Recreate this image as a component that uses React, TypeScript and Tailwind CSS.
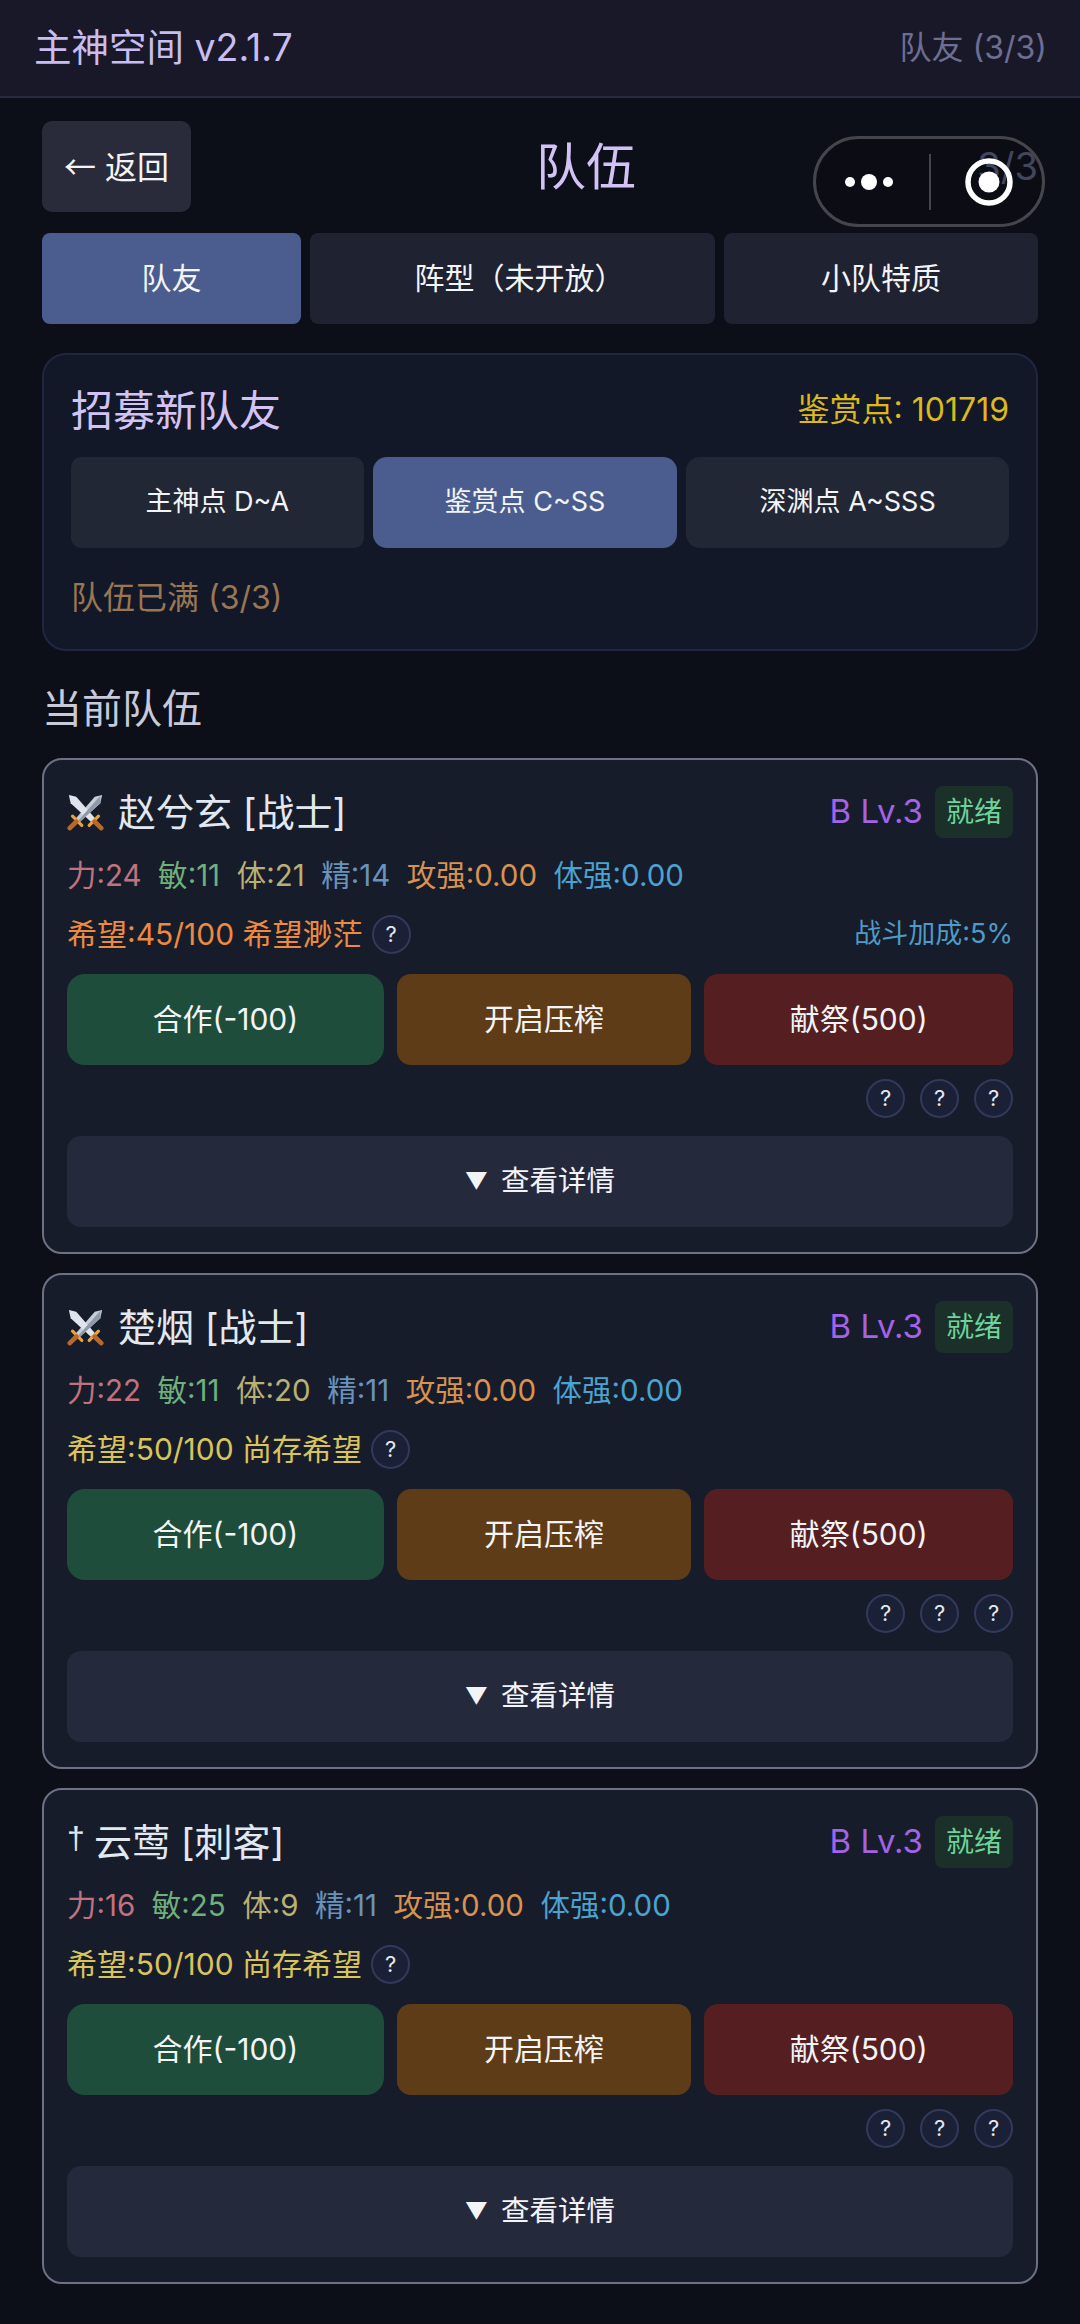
const fontStack = "font-['Inter','Noto_Sans_CJK_SC',sans-serif]";

function Swords() {
  return (
    <svg viewBox="0 0 40 40" className="w-[37px] h-[37px] shrink-0">
      <path d="M38 1 L36 10 L13 31 L9 27 L30 3 Z" fill="#c6ced8" />
      <path d="M2 1 L10 3 L31 27 L27 31 L4 10 Z" fill="#dfe5ec" />
      <path d="M36 2 L12 29 L13 31 L36 10 Z" fill="#8f9aa8" />
      <path d="M6 24 L16 34 M34 24 L24 34" stroke="#e8a33d" strokeWidth="3.5" strokeLinecap="round" />
      <path d="M10 30 L3 37 M30 30 L37 37" stroke="#b9682c" strokeWidth="5" strokeLinecap="round" />
    </svg>
  );
}

function Help() {
  return (
    <div className="w-[39px] h-[39px] rounded-full border-2 border-[#32395a] bg-[#1a2035] flex items-center justify-center text-[22px] text-[#e5e7eb]">
      ?
    </div>
  );
}

type Member = {
  icon: "swords" | "dagger";
  name: string;
  stats: [string, string][];
  hope: string;
  hopeColor: string;
  bonus?: string;
};

const C = ["text-[#c0737f]", "text-[#6fb07c]", "text-[#b9b074]", "text-[#6a93bb]", "text-[#d9924f]", "text-[#4aa3d0]"];

const members: Member[] = [
  {
    icon: "swords",
    name: "赵兮玄 [战士]",
    stats: [["力", "24"], ["敏", "11"], ["体", "21"], ["精", "14"], ["攻强", "0.00"], ["体强", "0.00"]],
    hope: "希望:45/100 希望渺茫",
    hopeColor: "text-[#ed8a3f]",
    bonus: "战斗加成:5%",
  },
  {
    icon: "swords",
    name: "楚烟 [战士]",
    stats: [["力", "22"], ["敏", "11"], ["体", "20"], ["精", "11"], ["攻强", "0.00"], ["体强", "0.00"]],
    hope: "希望:50/100 尚存希望",
    hopeColor: "text-[#d9c45c]",
  },
  {
    icon: "dagger",
    name: "云莺 [刺客]",
    stats: [["力", "16"], ["敏", "25"], ["体", "9"], ["精", "11"], ["攻强", "0.00"], ["体强", "0.00"]],
    hope: "希望:50/100 尚存希望",
    hopeColor: "text-[#d9c45c]",
  },
];

function Card({ m }: { m: Member }) {
  return (
    <div className="h-[496px] rounded-[20px] border-[2.5px] border-[#6c7184] bg-[#171c2b] px-[23px] pt-[25px]">
      <div className="flex items-center justify-between h-[54px]">
        <div className="flex items-center gap-[14px] text-[38px] leading-none text-[#e2e8f0]">
          {m.icon === "swords" ? <Swords /> : <span className="text-[32px] -mt-[8px] text-[#e2e8f0] font-['Liberation_Sans',sans-serif] w-[13px]">†</span>}
          <span>{m.name}</span>
        </div>
        <div className="flex items-center gap-[12px]">
          <span className="text-[33px] text-[#a463e6]">B Lv.3</span>
          <span className="w-[78px] h-[52px] rounded-[8px] bg-[#1a3029] flex items-center justify-center text-[28px] text-[#6ed39a]">就绪</span>
        </div>
      </div>
      <div className="mt-[16px] flex gap-[16.5px] text-[29.5px] leading-[40px] h-[40px]">
        {m.stats.map(([k, v], i) => (
          <span key={k} className={C[i]}>{k}:{v}</span>
        ))}
      </div>
      <div className="mt-[19px] flex items-center justify-between h-[40px]">
        <div className={`flex items-center gap-[9px] text-[30px] ${m.hopeColor}`}>
          <span>{m.hope}</span>
          <Help />
        </div>
        {m.bonus && <span className="text-[27px] text-[#4f9ac6]">{m.bonus}</span>}
      </div>
      <div className="mt-[20px] flex gap-[13px] h-[91px] text-[30px] text-[#f3f4f6]">
        <button className="w-[317px] rounded-[18px] bg-[#1f4d3b]">合作(-100)</button>
        <button className="w-[295px] rounded-[14px] bg-[#5f3c18]">开启压榨</button>
        <button className="w-[309px] rounded-[14px] bg-[#551f21]">献祭(500)</button>
      </div>
      <div className="mt-[14px] flex justify-end gap-[15px]">
        <Help />
        <Help />
        <Help />
      </div>
      <button className="mt-[18px] w-full h-[91px] rounded-[14px] bg-[#25293c] text-[28.5px] text-[#f3f4f6] flex items-center justify-center gap-[13px]">
        <span className="text-[23px]">▼</span>
        <span>查看详情</span>
      </button>
    </div>
  );
}

export default function App() {
  return (
    <div className={`relative w-[1080px] h-[2324px] overflow-hidden bg-[#0d0f18] ${fontStack}`}>
      <header className="h-[98px] border-b-2 border-b-[#2a2b3e] bg-[#181829] flex items-center justify-between pl-[34px] pr-[33px]">
        <span className="text-[37.5px] text-[#c8bdf0]">主神空间 v2.1.7</span>
        <span className="text-[32px] text-[#6e6d92]">队友 (3/3)</span>
      </header>

      <main className="px-[42px]">
        <div className="relative mt-[23px] h-[91px] flex items-center">
          <button className="w-[149px] h-[91px] rounded-[10px] bg-[#2a2b3a] text-[32px] text-[#f3f4f6]">
            <span className="font-['Noto_Sans_CJK_SC',sans-serif]">←</span> 返回
          </button>
          <h1 className="absolute left-[494px] text-[50px] leading-none font-normal text-[#d3c3f5]">队伍</h1>
          <span className="absolute right-0 text-[38px] text-[#5a6080]">3/3</span>
        </div>

        <div className="mt-[21px] flex gap-[9px] h-[91px] text-[30px] text-[#f3f4f6]">
          <button className="w-[259px] rounded-[8px] bg-[#4a5d8e]">队友</button>
          <button className="w-[405px] rounded-[8px] bg-[#1f2231] pl-[14px]">阵型（未开放）</button>
          <button className="w-[314px] rounded-[8px] bg-[#1f2231]">小队特质</button>
        </div>

        <section className="mt-[29px] h-[298px] rounded-[24px] border-2 border-[#1f2740] bg-[#121827] px-[27px] pt-[31px]">
          <div className="flex items-center justify-between h-[48px]">
            <h2 className="text-[42px] font-normal text-[#d3c3f5]">招募新队友</h2>
            <span className="text-[32px] text-[#dcb91d]">鉴赏点: 101719</span>
          </div>
          <div className="mt-[23px] flex gap-[9px] h-[91px] text-[27px] text-[#f3f4f6]">
            <button className="w-[293px] rounded-[10px] bg-[#222735]">主神点 D~A</button>
            <button className="w-[305px] rounded-[14px] bg-[#4a5d8e]">鉴赏点 C~SS</button>
            <button className="w-[323px] rounded-[14px] bg-[#222735]">深渊点 A~SSS</button>
          </div>
          <p className="mt-[30px] text-[32px] leading-[40px] text-[#9a7653]">队伍已满 (3/3)</p>
        </section>

        <h2 className="mt-[34px] h-[48px] text-[40px] leading-[48px] font-normal text-[#c9c9dc]">当前队伍</h2>

        <div className="mt-[25px] flex flex-col gap-[19px]">
          {members.map((m) => (
            <Card key={m.name} m={m} />
          ))}
        </div>
      </main>

      <div className="absolute left-[813px] top-[136px] w-[232px] h-[91px] rounded-full border-[3px] border-[#45454c] bg-[#0a0a0d]/30 flex items-center">
        <svg viewBox="0 0 60 24" className="ml-[25px] w-[60px] h-[24px]">
          <circle cx="9" cy="12" r="5" fill="#fff" />
          <circle cx="28" cy="12" r="8" fill="#fff" />
          <circle cx="47" cy="12" r="5" fill="#fff" />
        </svg>
        <div className="ml-[28px] w-[2px] h-[56px] bg-[#45454c]" />
        <svg viewBox="0 0 50 50" className="ml-[33px] w-[50px] h-[50px]">
          <circle cx="25" cy="25" r="21" fill="none" stroke="#fff" strokeWidth="5.5" />
          <circle cx="25" cy="25" r="10.5" fill="#fff" />
        </svg>
      </div>
    </div>
  );
}
